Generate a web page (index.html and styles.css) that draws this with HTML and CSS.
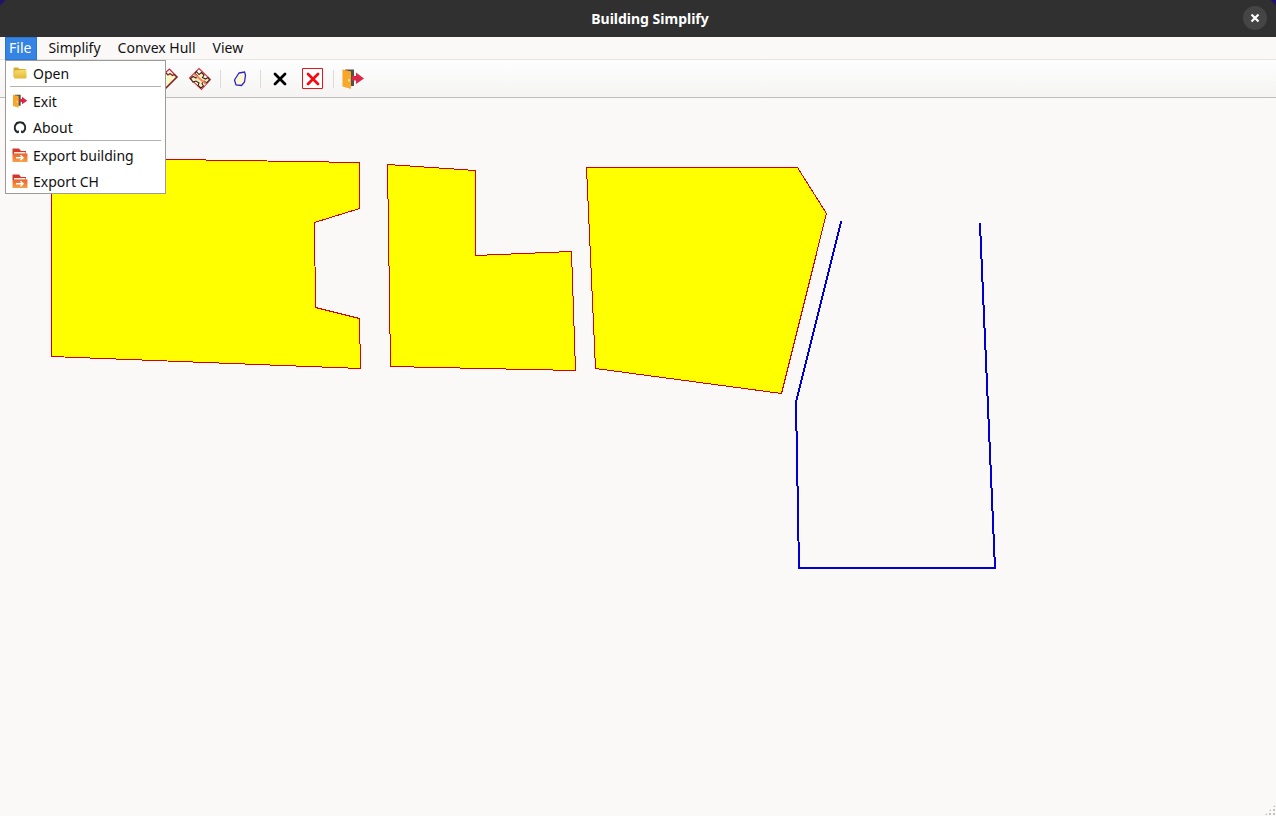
FILE: index.html
```html
<!DOCTYPE html>
<html lang="en">
<head>
<meta charset="utf-8">
<title>Building Simplify</title>
<link rel="stylesheet" href="styles.css">
</head>
<body>
<svg class="defs" aria-hidden="true">
  <defs>
    <linearGradient id="folderFill" x1="0" y1="0" x2="0" y2="1"><stop offset="0" stop-color="#f6de6c"/><stop offset="1" stop-color="#e2b83a"/></linearGradient>
    <linearGradient id="doorFill" x1="0" y1="0" x2="1" y2="1"><stop offset="0" stop-color="#f9a21f"/><stop offset="1" stop-color="#f7ad35"/></linearGradient>
    <linearGradient id="exportFill" x1="0" y1="0" x2="0" y2="1"><stop offset="0" stop-color="#e9622f"/><stop offset="1" stop-color="#f6a244"/></linearGradient>
    <symbol id="door" viewBox="0 0 24 24">
      <path d="M4 2.500H13V19H9Z" fill="#55504a"/>
      <path d="M1.500 2.500L10 4.500V22L1.500 19.500Z" fill="url(#doorFill)"/>
      <path d="M8 12V14.500" stroke="#fff3b0" stroke-width="1.500"/>
      <path d="M11 9H15V5.500L23 11.500L15 17V13.500H11Z" fill="#dc2848"/>
    </symbol>
    <symbol id="export" viewBox="0 0 16 16">
      <path d="M0.500 1.500H7L9 4H14V7H0.500Z" fill="#d2382b"/>
      <path d="M2 5H13.500V8H2Z" fill="#fbe6d8"/>
      <path d="M0.500 6.500H15.500V15H0.500Z" fill="url(#exportFill)"/>
      <path d="M4 10.800H11M8.500 8.300L11 10.800L8.500 13.300" fill="none" stroke="#fff" stroke-width="1.500"/>
    </symbol>
  </defs>
</svg>
<div class="window">
  <header class="titlebar">
    <h1 class="title">Building Simplify</h1>
    <button class="close" type="button" aria-label="Close window">
      <svg viewBox="0 0 10 10" width="10" height="10"><path d="M1.500 1.500L8.500 8.500M8.500 1.500L1.500 8.500" stroke="#fff" stroke-width="2.200"/></svg>
    </button>
  </header>
  <nav class="menubar">
    <div class="menu">
      <button class="menu-title open" type="button" aria-expanded="true">File</button>
      <div class="dropdown" role="menu">
        <button class="item" type="button" role="menuitem">
          <svg class="item-icon" viewBox="0 0 16 16"><path d="M1.500 3.500Q1.500 2.500 2.500 2.500H6L7.500 4H13Q14 4 14 5V12H1.500Z" fill="#dba92f"/><path d="M2.500 5.500L14.500 4.800V12.500Q14.500 13.500 13.500 13.500H3Q2 13.500 2 12.500Z" fill="url(#folderFill)"/></svg>Open</button>
        <hr class="rule">
        <button class="item" type="button" role="menuitem"><svg class="item-icon"><use href="#door"/></svg>Exit</button>
        <button class="item" type="button" role="menuitem">
          <svg class="item-icon" viewBox="0 0 16 16"><path d="M6 13.500A5.300 5.300 0 1 1 10 13.500" fill="none" stroke="#24292e" stroke-width="2"/><path d="M4 3L4.500 5.500L7 4ZM12 3L11.500 5.500L9 4Z" fill="#24292e"/><path d="M6.300 14V11.500M9.700 14V11.500M3 11L5 13" fill="none" stroke="#24292e" stroke-width="1.200"/></svg>About</button>
        <hr class="rule">
        <button class="item" type="button" role="menuitem"><svg class="item-icon"><use href="#export"/></svg>Export building</button>
        <button class="item" type="button" role="menuitem"><svg class="item-icon"><use href="#export"/></svg>Export CH</button>
      </div>
    </div>
    <button class="menu-title" type="button">Simplify</button>
    <button class="menu-title" type="button">Convex Hull</button>
    <button class="menu-title" type="button">View</button>
  </nav>
  <div class="toolbar" role="toolbar" aria-label="Tools">
    <span class="grip"></span>
    <button class="tool" type="button" aria-label="Simplify building">
      <svg viewBox="0 0 24 24"><path d="M12 5L15 8L18 6L22 10L10 22L2 13Z" fill="#fbf7c8"/><path d="M2 13L14.500 2L22 10L10 22Z" fill="none" stroke="#d62035" stroke-width="1.200"/><path d="M10.500 5.500L13 8L15 6.500L17.500 8.500L19.500 7.500L22 10L10 22" fill="none" stroke="#7a2018" stroke-width="1.300"/></svg>
    </button>
    <button class="tool" type="button" aria-label="Simplify all">
      <svg viewBox="0 0 24 24"><path d="M11 1.500L22.500 12.500L13.500 22.500L1.500 11Z" fill="#fff" stroke="#e03040" stroke-width="1.100"/><path d="M8.500 4.500L11 7.500L13.500 5.500L16 8L14.500 10.500L17.500 12L20 10.500L21.500 13L18.500 16L16 14L14 16.500L15.500 19L13 21L10 18.500L11 16L8 14L5 15L2.500 11.500L5 9.500L8 11L9.500 9L7 6.500Z" fill="#f8efbc" stroke="#3b2416" stroke-width="1.100"/><path d="M6 7L18 17" stroke="#f28c68" stroke-width="2.200"/></svg>
    </button>
    <span class="divider"></span>
    <button class="tool" type="button" aria-label="Convex hull">
      <svg viewBox="0 0 24 24"><path d="M11 6L16.500 5L17.500 8L16.500 15L13.500 18.500L8 18L6.500 13Z" fill="#fcf8d2" stroke="#2c24c8" stroke-width="1.300"/></svg>
    </button>
    <span class="divider"></span>
    <button class="tool" type="button" aria-label="Clear">
      <svg viewBox="0 0 24 24"><path d="M7 7L17 17M17 7L7 17" stroke="#000" stroke-width="2.800" stroke-linecap="round"/></svg>
    </button>
    <button class="tool" type="button" aria-label="Clear all">
      <svg viewBox="0 0 24 24"><path d="M1.500 1.500H21.500V21.500H1.500Z" fill="#fff" stroke="#e8141c" stroke-width="1"/><path d="M7 7L17 17M17 7L7 17" stroke="#f00d12" stroke-width="2.800" stroke-linecap="round"/></svg>
    </button>
    <span class="divider"></span>
    <button class="tool" type="button" aria-label="Exit"><svg><use href="#door"/></svg></button>
  </div>
  <main class="canvas">
    <svg class="drawing" role="img" aria-label="Building outlines">
      <g transform="translate(0 -98)" shape-rendering="crispEdges">
        <g fill="#ffff00" stroke="#d40000" stroke-width="1">
          <path d="M51.500 157.500L359.500 162.500V208.500L314.500 222.500L315.500 307.500L359.500 318.500L360.500 368.500L51.500 356.500Z"/>
          <path d="M387.500 164.500L475.500 170.500V255.500L571.500 251.500L575.500 370.500L390.500 366.500Z"/>
          <path d="M586.500 167.500H797.500L826.500 213.500L781.500 393.500L595.500 368.500Z"/>
        </g>
        <path d="M841 222L796 402L799 568H995L980 224" fill="none" stroke="#0000d0" stroke-width="2" stroke-linecap="square"/>
      </g>
    </svg>
    <span class="resize"></span>
  </main>
</div>
</body>
</html>
```
FILE: styles.css
```css
* { box-sizing: border-box; }
body { margin: 0; font-family: "Noto Sans", sans-serif; font-size: 14px; color: #111; }
button { font: inherit; color: inherit; border: 0; padding: 0; background: none; }
.defs { position: absolute; width: 0; height: 0; }
.window { display: flex; flex-direction: column; min-height: 100vh; background: #faf9f8; }
.titlebar {
  display: grid;
  grid-template-columns: 1fr auto 1fr;
  align-items: center;
  height: 37px;
  padding: 0 9px 1px 33px;
  background:
    linear-gradient(135deg, #23126b 3px, transparent 5px),
    linear-gradient(225deg, #23126b 3px, transparent 5px),
    #303030;
}
.title { grid-column: 2; margin: 0; font-size: 14px; font-weight: 700; color: #fff; }
.close {
  justify-self: end;
  display: grid;
  place-items: center;
  width: 24px;
  height: 24px;
  border-radius: 50%;
  background: #454545;
}
.menubar { display: flex; gap: 7px; height: 23px; padding-left: 5px; border-bottom: 1px solid #e6e4e2; background: #faf9f8; }
.menu { position: relative; }
.menu-title { display: block; height: 23px; padding: 0 6px 2px 4px; line-height: 21px; }
.menu-title.open { color: #fff; background: #3584e4; box-shadow: inset 0 0 0 1px #2a76d2; }
.dropdown { position: absolute; top: 23px; left: 0; z-index: 2; width: 161px; background: #fff; border-radius: 1px; }
.dropdown::after { content: ""; position: absolute; inset: 0; border: 1px solid #9c9b9a; pointer-events: none; }
.item { display: flex; align-items: center; gap: 5px; width: 100%; height: 26px; padding: 0 0 0 7px; white-space: nowrap; }
.item-icon { width: 16px; height: 16px; }
.rule { height: 2px; margin: 0 5px; border: 0; border-top: 1px solid #b5b3b1; }
.toolbar {
  display: flex;
  align-items: center;
  gap: 1px;
  height: 38px;
  padding-left: 4px;
  background: linear-gradient(#fefefe, #f5f4f3);
  border-bottom: 1px solid #bfbdbb;
}
.grip { width: 3px; height: 18px; margin-right: 143px; background: radial-gradient(circle, #c4c1be 1px, transparent 1px) 0 0 / 3px 4px; }
.tool { display: grid; place-items: center; width: 32px; height: 32px; }
.tool svg { width: 24px; height: 24px; }
.divider { width: 1px; height: 18px; margin: 0 2px 0 3px; background: #dddbd9; }
.canvas { position: relative; flex: 1; display: flex; background: #faf9f8; }
.drawing { flex: 1; min-height: 500px; }
.resize {
  position: absolute;
  right: 0;
  bottom: 0;
  width: 12px;
  height: 12px;
  background: radial-gradient(circle, #c4c1be 1px, transparent 1px) 0 0 / 4px 4px;
  clip-path: polygon(100% 0, 100% 100%, 0 100%);
}
```
